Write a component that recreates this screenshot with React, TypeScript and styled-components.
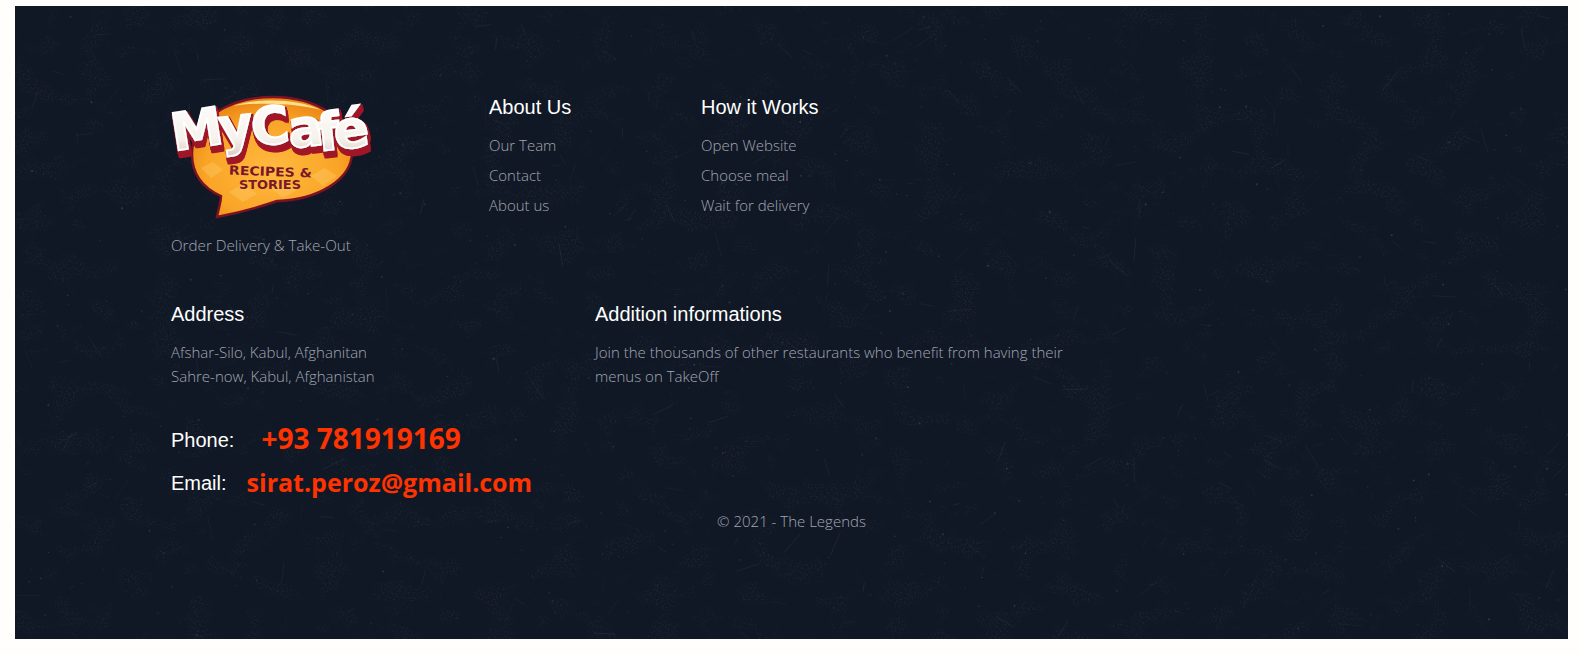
import React from "react";
import styled, { createGlobalStyle } from "styled-components";

const GlobalStyle = createGlobalStyle`
  html, body {
    margin: 0;
    padding: 0;
    background: #fffefc;
  }
`;

const Page = styled.div`
  padding: 6px 12px 15px 15px;
  height: 654px;
  box-sizing: border-box;
  overflow: hidden;
`;

const Panel = styled.footer`
  position: relative;
  overflow: hidden;
  height: 633px;
  box-sizing: border-box;
  padding: 89px 0 0 156px;
  background: #111825;
  font-family: "Open Sans", "Liberation Sans", sans-serif;
  font-weight: 300;
  font-size: 15px;
  line-height: 24px;
  color: #a2a6b4;
`;

const Texture = styled.svg`
  position: absolute;
  inset: 0;
  width: 100%;
  height: 100%;
`;

const Content = styled.div`
  position: relative;
`;

const Row = styled.div<{ $top?: number }>`
  display: flex;
  margin-top: ${(p) => p.$top ?? 0}px;
`;

const Column = styled.div<{ $width: number }>`
  width: ${(p) => p.$width}px;
  flex: none;
`;

const Heading = styled.h4`
  margin: 0;
  font-family: "Liberation Sans", Arial, sans-serif;
  font-size: 20px;
  font-weight: 400;
  line-height: 24px;
  color: #fff;
`;

const LinkList = styled.ul`
  list-style: none;
  margin: 11px 0 0;
  padding: 0;
`;

const LinkItem = styled.li`
  height: 30px;
  line-height: 30px;
`;

const LogoBox = styled.div`
  height: 137px;
  margin-top: 1px;
`;

const LogoArt = styled.svg`
  display: block;
  overflow: visible;
`;

const Text = styled.p<{ $width?: number }>`
  margin: 14px 0 0;
  ${(p) => (p.$width ? `width: ${p.$width}px;` : "")}
`;

const Tagline = styled.p`
  margin: 0;
  font-size: 15.2px;
`;

const Contacts = styled.div`
  margin-top: 30px;
`;

const ContactRow = styled.div`
  display: flex;
  align-items: center;
  height: 43px;
  font-family: "Liberation Sans", Arial, sans-serif;
  font-size: 20px;
  font-weight: 400;
  color: #fff;
`;

const ContactValue = styled.span<{ $left: number; $size: number; $lift: number }>`
  margin-left: ${(p) => p.$left}px;
  margin-bottom: ${(p) => p.$lift}px;
  font-family: "Comic Sans MS", "Open Sans", sans-serif;
  font-size: ${(p) => p.$size}px;
  font-weight: 700;
  color: #ff3300;
`;

const Copyright = styled.p`
  margin: 5px 0 0 -156px;
  text-align: center;
`;

// repeatable scratches for the dark paper background
const seeded = (seed: number) => () => {
  seed = (seed * 16807) % 2147483647;
  return (seed - 1) / 2147483646;
};

const rnd = seeded(4711);
const scratches = Array.from({ length: 300 }, () => {
  const x = rnd() * 1553;
  const y = rnd() * 633;
  const angle = rnd() * Math.PI;
  const len = 4 + rnd() * 22;
  return {
    x1: x,
    y1: y,
    x2: x + Math.cos(angle) * len,
    y2: y + Math.sin(angle) * len,
    o: 0.02 + rnd() * 0.05,
  };
});
const specks = Array.from({ length: 520 }, () => ({
  x: rnd() * 1553,
  y: rnd() * 633,
  r: 0.4 + rnd() * 0.7,
  o: 0.04 + rnd() * 0.1,
}));

const PaperTexture = () => (
  <Texture aria-hidden="true">
    <filter id="dust" x="0" y="0" width="100%" height="100%">
      <feTurbulence type="fractalNoise" baseFrequency="0.03 0.04" numOctaves="4" seed="21" />
      <feColorMatrix values="0 0 0 0 1  0 0 0 0 1  0 0 0 0 1  0 0 0 6 -3" result="patches" />
      <feTurbulence type="fractalNoise" baseFrequency="0.6" numOctaves="2" seed="8" />
      <feColorMatrix values="0 0 0 0 1  0 0 0 0 1  0 0 0 0 1  0 0 0 2.2 -1.05" />
      <feComposite in2="patches" operator="in" />
    </filter>
    <rect width="100%" height="100%" filter="url(#dust)" opacity="0.07" />
    {scratches.map((s, i) => (
      <line key={i} x1={s.x1} y1={s.y1} x2={s.x2} y2={s.y2} stroke="#fff" strokeOpacity={s.o} strokeWidth="0.8" />
    ))}
    {specks.map((s, i) => (
      <circle key={i} cx={s.x} cy={s.y} r={s.r} fill="#fff" fillOpacity={s.o} />
    ))}
  </Texture>
);

const Logo = () => (
  <LogoArt width="200" height="122" viewBox="0 0 200 122" role="img" aria-label="MyCafé logo">
    <defs>
      <radialGradient id="bubbleFill" cx="50%" cy="60%" r="60%">
        <stop offset="0" stopColor="#ffba40" />
        <stop offset="0.7" stopColor="#f9a426" />
        <stop offset="1" stopColor="#e98414" />
      </radialGradient>
      <linearGradient id="wordFill" x1="0" y1="0" x2="0" y2="1">
        <stop offset="0" stopColor="#ffffff" />
        <stop offset="0.65" stopColor="#f6f1ec" />
        <stop offset="1" stopColor="#cdbfb6" />
      </linearGradient>
      <filter id="extrude" x="-5%" y="-10%" width="110%" height="130%">
        <feMorphology in="SourceAlpha" operator="dilate" radius="0.5" result="fat" />
        <feOffset in="fat" dx="0.5" dy="1.5" result="a" />
        <feOffset in="fat" dx="1" dy="3" result="b" />
        <feOffset in="fat" dx="1.5" dy="4.5" result="c" />
        <feOffset in="fat" dx="2" dy="6" result="d" />
        <feMerge result="depth">
          <feMergeNode in="a" />
          <feMergeNode in="b" />
          <feMergeNode in="c" />
          <feMergeNode in="d" />
        </feMerge>
        <feFlood floodColor="#a01325" />
        <feComposite in2="depth" operator="in" result="red" />
        <feMerge>
          <feMergeNode in="red" />
          <feMergeNode in="SourceGraphic" />
        </feMerge>
      </filter>
    </defs>
    <path
      d="M46 121 C47 114 50 107 50 100 C32 92 21 78 21 58 C21 24 58 1 102 1 C146 1 181 24 181 56 C181 84 146 104 106 105 C86 112 66 117 46 121 Z"
      fill="url(#bubbleFill)"
      stroke="#7d1224"
      strokeWidth="2.4"
    />
    <path d="M62 10 C80 3 125 1 150 14 C125 7 85 6 62 10 Z" fill="#ffdf8c" />
    <g fill="#ffd071" opacity="0.35">
      <path d="M58 96 L72 88 L86 98 L72 106 Z" />
      <path d="M100 92 L114 86 L126 94 L112 102 Z" />
      <path d="M140 80 L154 72 L166 80 L152 90 Z" />
      <path d="M30 72 L42 66 L52 74 L40 82 Z" />
    </g>
    <text
      x="3 50 82 119 148 165"
      y="55 50 50 52 55 54"
      rotate="-9 -7 -6 -6 -6 -8"
      fill="url(#wordFill)"
      stroke="#fff"
      strokeWidth="1.8"
      filter="url(#extrude)"
      fontFamily="'DejaVu Sans', sans-serif"
      fontWeight="700"
      fontSize="52"
    >
      MyCafé
    </text>
    <text x="58" y="80" fontFamily="'DejaVu Sans', sans-serif" fontWeight="700" fontSize="12.5" fill="#7a1729" textLength="83" lengthAdjust="spacingAndGlyphs" transform="rotate(2 100 75)">
      RECIPES &amp;
    </text>
    <text x="68" y="93" fontFamily="'DejaVu Sans', sans-serif" fontWeight="700" fontSize="12.5" fill="#7a1729" textLength="62" lengthAdjust="spacingAndGlyphs">
      STORIES
    </text>
  </LogoArt>
);

const App: React.FC = () => (
  <Page>
    <GlobalStyle />
    <Panel>
      <PaperTexture />
      <Content>
        <Row>
          <Column $width={318}>
            <LogoBox>
              <Logo />
            </LogoBox>
            <Tagline>Order Delivery &amp; Take-Out</Tagline>
          </Column>
          <Column $width={212}>
            <Heading>About Us</Heading>
            <LinkList>
              <LinkItem>Our Team</LinkItem>
              <LinkItem>Contact</LinkItem>
              <LinkItem>About us</LinkItem>
            </LinkList>
          </Column>
          <Column $width={200}>
            <Heading>How it Works</Heading>
            <LinkList>
              <LinkItem>Open Website</LinkItem>
              <LinkItem>Choose meal</LinkItem>
              <LinkItem>Wait for delivery</LinkItem>
            </LinkList>
          </Column>
        </Row>
        <Row $top={45}>
          <Column $width={424}>
            <Heading>Address</Heading>
            <Text>
              Afshar-Silo, Kabul, Afghanitan
              <br />
              Sahre-now, Kabul, Afghanistan
            </Text>
          </Column>
          <Column $width={480}>
            <Heading>Addition informations</Heading>
            <Text $width={480}>
              Join the thousands of other restaurants who benefit from having their menus on TakeOff
            </Text>
          </Column>
        </Row>
        <Contacts>
          <ContactRow>
            Phone:
            <ContactValue $left={27} $size={28} $lift={3}>+93 781919169</ContactValue>
          </ContactRow>
          <ContactRow>
            Email:
            <ContactValue $left={20} $size={25} $lift={1}>sirat.peroz@gmail.com</ContactValue>
          </ContactRow>
        </Contacts>
        <Copyright>© 2021 - The Legends</Copyright>
      </Content>
    </Panel>
  </Page>
);

export default App;
